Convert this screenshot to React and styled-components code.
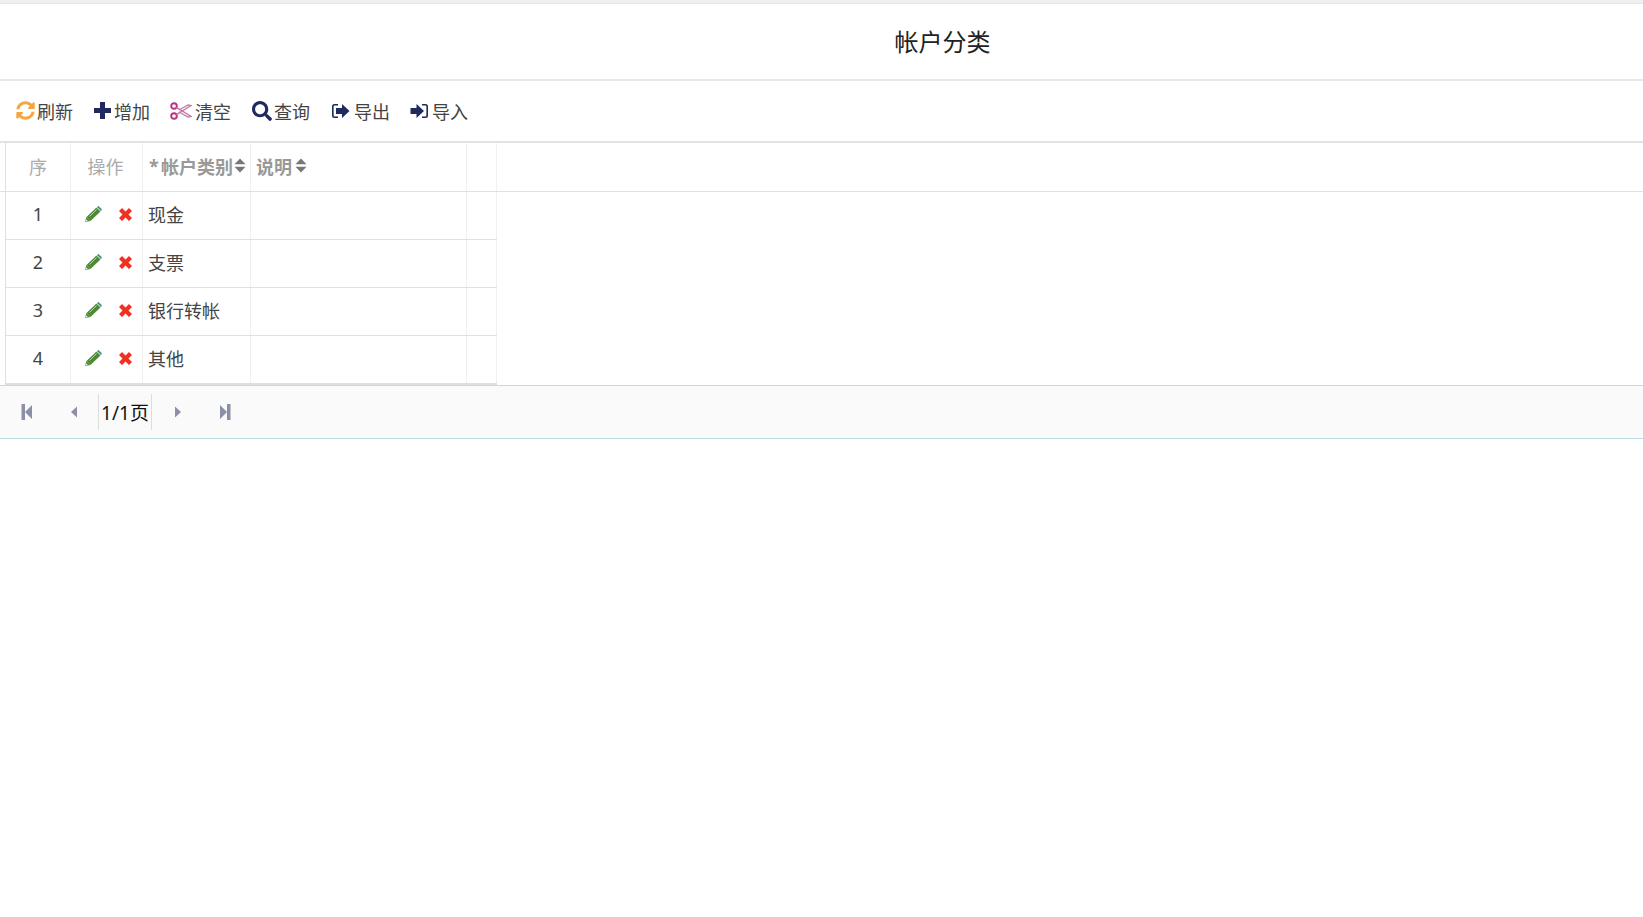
import React from "react";
import styled, { createGlobalStyle } from "styled-components";
import { FaSyncAlt, FaSearch } from "react-icons/fa";

const GlobalStyle = createGlobalStyle`
  html, body {
    margin: 0;
    padding: 0;
    background: #fff;
    font-family: "Noto Sans", "Noto Sans CJK SC", sans-serif;
    color: #444;
  }
`;

const Page = styled.div`
  min-height: 917px;
  border-top: 3px solid #f0f0f0;
  box-sizing: border-box;
`;

const TopLine = styled.div`
  height: 1px;
  background: #e6e6e6;
`;

const Title = styled.h1`
  height: 75px;
  margin: 0;
  padding-left: 242px;
  border-bottom: 2px solid #e8e8e8;
  font-size: 24px;
  font-weight: 400;
  line-height: 74px;
  text-align: center;
  color: #222;
  font-family: "Noto Sans CJK SC", sans-serif;
`;

const Toolbar = styled.div`
  height: 60px;
  padding-left: 6px;
  display: flex;
  align-items: center;
  border-bottom: 2px solid #e2e2e2;
`;

const ToolButton = styled.button`
  height: 36px;
  padding: 0 10px 1px;
  display: flex;
  align-items: center;
  gap: ${(p) => p.$gap || 2}px;
  border: 0;
  background: none;
  font: inherit;
  font-size: 18px;
  color: #444;
`;

const ToolIcon = styled.span`
  display: flex;
  align-items: center;
  justify-content: center;
  width: ${(p) => p.$width || 19}px;
  color: ${(p) => p.$color || "#1f2a5e"};
`;

const HeaderRow = styled.div`
  height: 49px;
  padding-left: 5px;
  display: flex;
  border-bottom: 1px solid #e0e0e0;
  box-sizing: border-box;
`;

const BodyRow = styled.div`
  width: 492px;
  height: ${(p) => (p.$last ? 49 : 48)}px;
  margin-left: 5px;
  display: flex;
  border-bottom: ${(p) => (p.$last ? "2px solid #dcdfe3" : "1px solid #e0e0e0")};
  box-sizing: border-box;
`;

const Cell = styled.div`
  width: ${(p) => p.$w}px;
  display: flex;
  align-items: center;
  justify-content: ${(p) => (p.$center ? "center" : "flex-start")};
  gap: ${(p) => p.$gap || 0}px;
  padding: 0 ${(p) => p.$padRight || 0}px 3px ${(p) => p.$pad || 0}px;
  border-left: ${(p) => (p.$edge ? "1px solid #e0e0e0" : "0")};
  border-right: 1px solid #f0f0f0;
  box-sizing: border-box;
  font-size: 18px;
  color: ${(p) => p.$color || "#444"};
  font-weight: ${(p) => (p.$bold ? 700 : 400)};
`;

const Required = styled.span`
  width: 12px;
  flex: none;
`;

const SortMark = styled.svg`
  flex: none;
  margin-left: ${(p) => p.$gap || 1}px;
  color: #777;
`;

const Pager = styled.div`
  height: 52px;
  padding-left: 3px;
  display: flex;
  align-items: center;
  background: #fafafa;
  border-top: 1px solid #bcdcec;
  border-bottom: 1px solid #bcdcec;
`;

const PagerButton = styled.span`
  width: 47px;
  display: flex;
  justify-content: center;
  color: #8b90a8;
`;

const PageInfo = styled.span`
  width: 54px;
  height: 36px;
  margin: 0 2px 0 1px;
  padding-bottom: 1px;
  display: flex;
  align-items: center;
  justify-content: center;
  border-left: 1px solid #ddd;
  border-right: 1px solid #ddd;
  box-sizing: border-box;
  font-size: 19px;
  color: #111;
`;

const SortIcon = ({ gap }) => (
  <SortMark $gap={gap} width="12" height="15" viewBox="0 0 12 15" fill="currentColor">
    <path d="M6 0.500 11.500 6.200H.5zM6 14.500.5 8.800h11z" />
  </SortMark>
);

const Plus = () => (
  <svg width="17" height="17" viewBox="0 0 17 17" fill="currentColor">
    <path d="M6 0h5v6h6v5h-6v6H6v-6H0V6h6z" />
  </svg>
);

const Scissors = () => (
  <svg width="22" height="18" viewBox="0 0 22 18" fill="none" stroke="#bd2f80" strokeWidth="1.900">
    <circle cx="4" cy="4" r="2.800" />
    <circle cx="4" cy="14" r="2.800" />
    <path d="M6.400 5.400 21 14.500 18 15 9 10" stroke="#c77aa8" strokeWidth="1.300" />
    <path d="M6.400 12.600 21 3.500 18 3 9 8" stroke="#c77aa8" strokeWidth="1.300" />
  </svg>
);

const LogOut = () => (
  <svg width="19" height="18" viewBox="0 0 19 18" fill="#1f2a5e">
    <path d="M7 2H3.500A2.500 2.500 0 0 0 1 4.500v9A2.500 2.500 0 0 0 3.500 16H7v-1.600H3.800a1.200 1.200 0 0 1-1.200-1.200V4.800a1.200 1.200 0 0 1 1.200-1.200H7z" />
    <path d="M5 6h6V2L18.500 9 11 16v-4H5z" />
  </svg>
);

const LogIn = () => (
  <svg width="19" height="18" viewBox="0 0 19 18" fill="#1f2a5e">
    <path d="M12 2h3.500A2.500 2.500 0 0 1 18 4.500v9a2.500 2.500 0 0 1-2.500 2.500H12v-1.600h3.200a1.200 1.200 0 0 0 1.200-1.200V4.800a1.200 1.200 0 0 0-1.200-1.200H12z" />
    <path d="M.5 6h6V2L14 9l-7.500 7v-4h-6z" />
  </svg>
);

const Pencil = () => (
  <svg width="17" height="16" viewBox="0 0 17 16">
    <path d="M11.500 1.500 15.500 5.500 5.500 15 1.500 11z" fill="#4f8a3a" />
    <path d="M12 1 13.500 0 17 3.500 16 5z" fill="#3f8a80" />
    <path d="M1.500 11 5.500 15 0 16z" fill="#4f8a3a" />
    <path d="M1.400 13.600 2.800 15 .6 15.500z" fill="#fff" />
    <path d="M4.500 10.500 11.500 3.500" stroke="#b4d6a4" strokeWidth="1" />
  </svg>
);

const Cross = () => (
  <svg width="13" height="13" viewBox="0 0 13 13" fill="#f03020">
    <path d="M3 0 6.500 3.500 10 0 13 3 9.500 6.500 13 10 10 13 6.500 9.500 3 13 0 10 3.500 6.500 0 3z" />
  </svg>
);

const PagerIcon = ({ d, width = 12 }) => (
  <svg width={width} height="16" viewBox={`0 0 ${width} 16`} fill="currentColor">
    <path d={d} />
  </svg>
);

const tools = [
  { label: "刷新", icon: <FaSyncAlt size={19} />, color: "#f6a63f", gap: 2 },
  { label: "增加", icon: <Plus />, width: 18, gap: 3 },
  { label: "清空", icon: <Scissors />, width: 22, gap: 3 },
  { label: "查询", icon: <FaSearch size={20} />, width: 21, gap: 2 },
  { label: "导出", icon: <LogOut />, width: 20, gap: 4 },
  { label: "导入", icon: <LogIn />, gap: 3 },
];

const rows = ["现金", "支票", "银行转帐", "其他"];

export default function App() {
  return (
    <Page>
      <GlobalStyle />
      <TopLine />
      <Title>帐户分类</Title>
      <Toolbar>
        {tools.map((t) => (
          <ToolButton key={t.label} $gap={t.gap}>
            <ToolIcon $color={t.color} $width={t.width}>
              {t.icon}
            </ToolIcon>
            {t.label}
          </ToolButton>
        ))}
      </Toolbar>
      <HeaderRow>
        <Cell $w={66} $center $edge $color="#aaa">序</Cell>
        <Cell $w={72} $center $padRight={2} $color="#aaa">操作</Cell>
        <Cell $w={108} $pad={6} $bold $color="#999">
          <Required>*</Required>帐户类别<SortIcon />
        </Cell>
        <Cell $w={216} $pad={5} $bold $color="#999">
          说明<SortIcon gap={3} />
        </Cell>
        <Cell $w={30} />
      </HeaderRow>
      {rows.map((name, i) => (
        <BodyRow key={name} $last={i === rows.length - 1}>
          <Cell $w={66} $center $edge>{i + 1}</Cell>
          <Cell $w={72} $pad={14} $gap={17}>
            <Pencil />
            <Cross />
          </Cell>
          <Cell $w={108} $pad={5}>{name}</Cell>
          <Cell $w={216} />
          <Cell $w={30} />
        </BodyRow>
      ))}
      <Pager>
        <PagerButton>
          <PagerIcon d="M0.500 0h3.500v16H.5zM4 8l7-7v14z" />
        </PagerButton>
        <PagerButton>
          <PagerIcon d="M9 2.500v11L3 8z" />
        </PagerButton>
        <PageInfo>1/1页</PageInfo>
        <PagerButton>
          <PagerIcon d="M3 2.500v11L9 8z" />
        </PagerButton>
        <PagerButton>
          <PagerIcon d="M11.500 0H8v16h3.500zM8 8 1 1v14z" />
        </PagerButton>
      </Pager>
    </Page>
  );
}
